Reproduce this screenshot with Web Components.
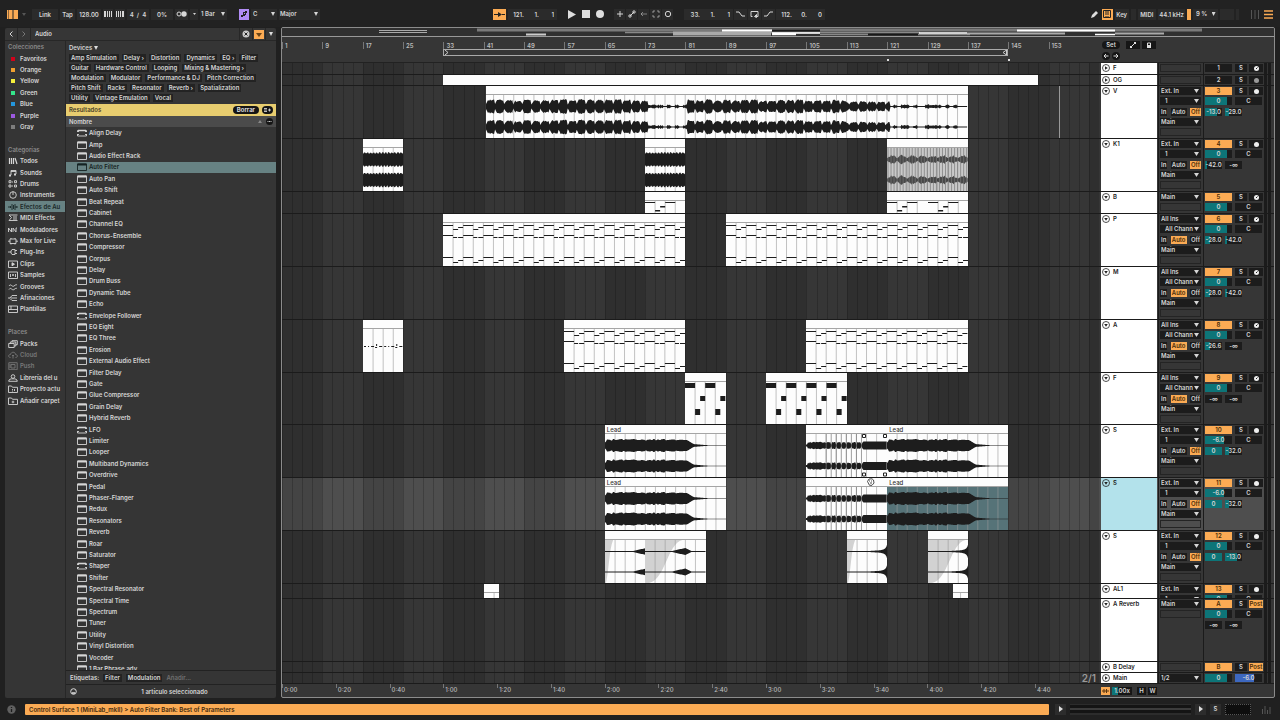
<!DOCTYPE html>
<html lang="es">
<head>
<meta charset="utf-8">
<title>Arrangement</title>
<style>
  :root {
    --orange: #fbab54;
    --teal: #0d7578;
    --panel: #363636;
    --well: #1c1c1c;
    --text: #d6d6d6;
    --dim: #8a8a8a;
  }
  * { box-sizing: border-box; }
  body {
    margin: 0;
    min-height: 100vh;
    display: flex;
    flex-direction: column;
    background: #202020;
    color: var(--text);
    font: 600 6px/8px Inter, "Liberation Sans", sans-serif;
  }
  main {
    flex: 1;
    display: flex;
    gap: 5px;
    padding: 0 5px;
  }
  arrange-view { flex: 1; min-width: 0; }
</style>
</head>
<body>
  <top-bar></top-bar>
  <main>
    <browser-panel></browser-panel>
    <arrange-view></arrange-view>
  </main>
  <status-bar></status-bar>

<script>
const BASE = `
  * { box-sizing: border-box; margin: 0; }
  button, input, select { font: inherit; color: inherit; border: 0; padding: 0; border-radius: 0; background: none; min-width: 0; }
  ul { list-style: none; padding: 0; }
  a { color: inherit; text-decoration: none; }
`;

class BaseElement extends HTMLElement {
  constructor() {
    super();
    this.attachShadow({ mode: 'open' });
  }

  connectedCallback() {
    this.shadowRoot.innerHTML = `<style>${BASE}${this.css}</style>${this.template}`;
  }
}

/* ---------- icons, all on a 10 x 8 grid unless noted ---------- */

const ICONS = {
  device: '<path d="M.5 1h9v6.500h-9z"/><path d="M.5 1.500h9" stroke-width="2"/>',
  maxdevice: '<path d="M.5 2.500v-1h9v1M.5 5.500v1.500h9V5.500M0 2.500h2M8 2.500h2M0 5.500h2M8 5.500h2"/><path d="M1 1.500h8" stroke-width="1.600"/>',
  books: '<path d="M1.500 1v6M3.500 1v6M5.500 1v6M7 1l2 6" stroke-width="1.200"/>',
  note: '<path d="M3 6V1.500h5V5M3 2.500h5"/><path d="M1 6.500h2M6 5.500h2" stroke-width="2"/>',
  drums: '<path d="M1 .7h2v2H1zM6.500.7h2v2h-2zM1 5h2v2H1zM6.500 5h2v2h-2z"/><path d="M4 2h1M4 6h1"/>',
  dial: '<circle cx="5" cy="4" r="3.300"/><path d="M5 .5V4"/>',
  wave: '<path d="M0 4h2M2.500 3v2M4 1v6M5.500 2v4M7 1v6M8 3v2M8 4h2"/>',
  midifx: '<path d="M9.500 1H1l2.500 2.500L1 6.500h8.500M5 3h4M5 5h4"/>',
  mod: '<path d="M.5 6V2l3 4V2M5 6V2l3 4V2h1"/>',
  max: '<path d="M2 2h6v4.500H2zM0 4.200h2M8 4.200h2M3 1v1M7 1v1M3 6.500v1M7 6.500v1"/>',
  plug: '<path d="M0 4h3M4 1.500h3v5H4L3 5V3zM7 2.500h2M7 5.500h2"/>',
  clip: '<path d="M.5 1h9v6.500h-9z"/><path d="M4 2.700L6.500 4.200 4 5.800z" fill="currentColor"/>',
  sample: '<path d="M.5 1h9v6.500h-9zM2.500 3v3M4 4h2M7.500 3v3M5 3v2"/>',
  groove: '<path d="M1 3c2-3 3 1.500 5 0s2-1.500 3-1M1 6.500c2-3 3 1.500 5 0s2-1.500 3-1"/>',
  tuning: '<path d="M0 4h2l2-2.500h5M3 4h6M2 4.500L4 6.500h5"/>',
  template: '<path d="M.5 1h9v6.500h-9zM.5 4.500h9M3 1v3.500"/>',
  packs: '<path d="M.7 3.500h5.500v4H.7zM2.300 3.500V2h5.500v4H6.200M4 2V.7h5.300v4H7.800"/>',
  cloud: '<path d="M2.500 6.500C0 6.500 0 3.500 2.500 3.500 3 .5 7.500 .5 7.500 3.500 10 3.500 10 6.500 7.500 6.500M5 7.500V4M4 5l1-1 1 1"/>',
  push: '<path d="M.8.700h8.400v7H.8zM3 2.500h4v3.500H3zM2 2v4"/>',
  user: '<circle cx="5" cy="2.500" r="1.800"/><path d="M.7 7.300c0-2.200 2-2.500 4.300-2.500s4.300.3 4.300 2.500z"/>',
  project: '<path d="M.5 7.500V1h3l1 1.300h5v5.200zM4 4.500h1M6.500 4v2M4 6h1"/>',
  addfolder: '<path d="M.5 7.500V1h3l1 1.300h5v5.200zM5 3.700v2.600M3.700 5h2.600"/>',
};

const icon = (name, w = 10, h = 8) =>
  `<svg width="${w}" height="${h}" viewBox="0 0 10 8" fill="none" stroke="currentColor" stroke-width=".9" aria-hidden="true">${ICONS[name]}</svg>`;

/* drop-down with the small triangle of the toolbar */
class UiSelect extends BaseElement {
  get css() {
    return `
      :host { display: grid; align-items: center; background: var(--well); height: 8px; overflow: hidden; }
      select { grid-area: 1 / 1; width: 100%; height: 8px; line-height: 8px; appearance: none; padding: 0 6px 0 var(--indent, 1px); outline: 0; }
      i { grid-area: 1 / 1; justify-self: end; margin-right: 2px; width: var(--arrow, 5px); height: 4px; background: var(--text); clip-path: polygon(0 0, 100% 0, 50% 100%); pointer-events: none; }
      option { color: #000; }
    `;
  }
  get template() {
    return `<select aria-label="${this.getAttribute('label')}"><option>${this.getAttribute('value')}</option></select><i></i>`;
  }
}

class TopBar extends BaseElement {
  get css() {
    return `
      :host {
        display: grid;
        grid-template-columns: 486fr 598fr 182px;
        align-items: center;
        height: 27px;
        padding: 1px 7px 0;
        background: #222;
      }
      .group { display: flex; align-items: center; gap: 2px; }
      .tight { gap: 1px; }
      .group > *, .pos { height: 11px; line-height: 11px; }
      button, .pos, .val { background: #2b2b2b; text-align: center; }
      button { display: grid; place-items: center; }
      button.on { background: var(--orange); color: #222; }
      button.bare { background: none; }
      button.scale { background: #b18cf5; color: #222; width: 10px; }
      ui-select { background: #2b2b2b; --indent: 3px; --arrow: 4px; }
      .pos { display: flex; justify-content: flex-end; gap: 2px; padding-right: 3px; width: 49px; }
      .pos input { width: 13px; text-align: right; }
      .link { width: 26px; } .tap { width: 15px; } .tempo { width: 24px; }
      .sq { width: 11px; } .nudge { width: 10px; }
      .meter { width: 4px; background: var(--orange); }
      .line { width: 20px; background: #2b2b2b; }
    `;
  }
  pos(label, parts) {
    return `<div class="pos" role="group" aria-label="${label}">${parts.map((p, i) => `<input aria-label="${label} ${i + 1}" value="${p}">`).join('')}</div>`;
  }
  get template() {
    return `
      <div class="group">
        <button class="bare" aria-label="Browser" style="width:11px">
          <svg width="11" height="11" viewBox="0 0 11 11" fill="#fbab54"><path d="M0 1h1.500v9H0zM2 1h3.500v9H2zM6.500 1H11v9H6.500z"/></svg></button>
        <button class="bare" aria-label="Vistas" style="width:7px"><svg width="4" height="3"><path d="M0 0h4L2 3z" fill="#555"/></svg></button>
        <span style="width:1px"></span>
        <button class="link">Link</button>
        <button class="tap">Tap</button>
        <input class="val tempo" aria-label="Tempo" value="128.00">
        <button class="nudge" aria-label="Nudge down"><svg width="8" height="6" fill="currentColor"><path d="M0 0h2v6H0zM3 0h1v6H3zM5 0h1v6H5zM7 0h1v6H7z"/></svg></button>
        <button class="nudge" aria-label="Nudge up"><svg width="8" height="6" fill="currentColor"><path d="M0 0h1v6H0zM2 0h1v6H2zM4 0h1v6H4zM6 0h2v6H6z"/></svg></button>
        <input class="val" aria-label="Compás" value="4  /  4" style="width:22px">
        <input class="val" aria-label="Swing" value="0%" style="width:22px">
        <button aria-label="Metrónomo" style="width:13px"><svg width="11" height="6"><circle cx="3" cy="3" r="2" fill="none" stroke="currentColor"/><circle cx="8" cy="3" r="2.700" fill="currentColor"/></svg></button>
        <button aria-label="Metrónomo, opciones" style="width:8px"><svg width="3" height="2"><path d="M0 0h3L1.500 2z" fill="currentColor"/></svg></button>
        <ui-select label="Cuantización" value="1 Bar" style="width:27px;--indent:1px"></ui-select>
        <span style="width:8px"></span>
        <button class="scale" aria-label="Escala"><svg width="8" height="8" fill="currentColor"><path d="M1 5h2v2H1zM3 2h1v4H3zM5 1h1v4H5zM4 2h2v1H4zM6 1h1v2H6zM4 4h1v2H4z"/></svg></button>
        <ui-select label="Tónica" value="C" style="width:26px;--indent:2px"></ui-select>
        <ui-select label="Modo" value="Major" style="width:41px;--indent:1px"></ui-select>
      </div>
      <div class="group">
        <button class="on" aria-label="Follow" style="width:13px"><svg width="11" height="5"><path d="M0 2.500h11" stroke="currentColor" stroke-dasharray="5 1 1 1"/><path d="M4 0l4 2.500L4 5z" fill="currentColor"/></svg></button>
        ${this.pos('Posición', ['121.', '1.', '1'])}
        <span style="width:5px"></span>
        <button class="bare" aria-label="Play" style="width:12px"><svg width="8" height="9"><path d="M0 0l8 4.500L0 9z" fill="#ddd"/></svg></button>
        <button class="bare" aria-label="Stop" style="width:12px"><svg width="8" height="8"><path d="M0 0h8v8H0z" fill="#ddd"/></svg></button>
        <button class="bare" aria-label="Record" style="width:12px"><svg width="8" height="8"><circle cx="4" cy="4" r="4" fill="#ddd"/></svg></button>
        <span style="width:4px"></span>
        <div class="group tight">
          ${[
            ['Overdub', '<path d="M4 1v6M1 4h6"/>'],
            ['Automation arm', '<path d="M2 6l4-4"/><circle cx="2" cy="6" r="1.200"/><circle cx="6" cy="2" r="1.200"/>'],
            ['Re-enable', '<path d="M1 4h6M3 2L1 4l2 2" opacity=".5"/>'],
            ['Capture', '<path d="M1 3V1h2M5 1h2v2M7 5v2H5M3 7H1V5" opacity=".6"/>'],
            ['Session record', '<circle cx="4" cy="4" r="2.700"/>'],
          ].map(([n, p]) => `<button class="sq" aria-label="${n}"><svg width="8" height="8" fill="none" stroke="currentColor">${p}</svg></button>`).join('')}
        </div>
        <span style="width:7px"></span>
        <div class="group tight">
        ${this.pos('Inicio de loop', ['33.', '1.', '1'])}
        <button aria-label="Punch in" style="width:13px"><svg width="9" height="6" fill="none" stroke="currentColor"><path d="M0 1h3l3 4h3"/></svg></button>
        <button aria-label="Loop" style="width:13px"><svg width="9" height="8" fill="none" stroke="currentColor"><path d="M2.500 6.500H1v-5h7v5H6"/><path d="M6.500 4.500L4.500 6.500l2 1z" fill="currentColor"/></svg></button>
        <button aria-label="Punch out" style="width:13px"><svg width="9" height="6" fill="none" stroke="currentColor"><path d="M0 5h3l3-4h3"/></svg></button>
        ${this.pos('Largo de loop', ['112.', '0.', '0'])}
        </div>
      </div>
      <div class="group">
        <button class="bare" aria-label="Dibujar" style="width:9px"><svg width="8" height="8"><path d="M0 8l1-3 4-4 2 2-4 4z" fill="#ddd"/></svg></button>
        <button class="on sq" aria-label="Teclado MIDI"><svg width="8" height="8" fill="none" stroke="currentColor"><path d="M.5.500h7v7h-7zM3 1v4M5 1v4M3 6v1M5 6v1"/></svg></button>
        <button style="width:14px">Key</button>
        <button aria-label="Actividad MIDI" style="width:5px"></button>
        <button style="width:19px">MIDI</button>
        <button style="width:27px">44.1 kHz</button>
        <span class="meter"></span>
        <ui-select label="CPU" value="9 %" style="width:25px"></ui-select>
        <span class="line" style="width:15px"></span>
        <span class="line" style="width:3px"></span>
        <span style="width:8px"></span>
        <button class="bare" aria-label="Sesión"><svg width="8" height="9"><path d="M.5 0v9M4 0v9M7.500 0v9" stroke="#555"/></svg></button>
        <span style="width:1px"></span>
        <button class="bare" aria-label="Arreglo"><svg width="9" height="9"><path d="M0 1h9M0 4.500h9M0 8h9" stroke="#fbab54" stroke-width="1.500"/></svg></button>
      </div>`;
  }
}

/* ---------- browser ---------- */

const SIDEBAR = [
  ['Colecciones'],
  ['Favoritos', '#d0021b'], ['Orange', '#f0a030'], ['Yellow', '#f5f03c'], ['Green', '#34e58a'],
  ['Blue', '#2496dc'], ['Purple', '#9b59e0'], ['Gray', '#7d7d7d'],
  [], ['Categorías'],
  ['Todos', 'books'], ['Sounds', 'note'], ['Drums', 'drums'], ['Instruments', 'dial'],
  ['Efectos de Au', 'wave', 'on'], ['MIDI Effects', 'midifx'], ['Moduladores', 'mod'],
  ['Max for Live', 'max'], ['Plug-Ins', 'plug'], ['Clips', 'clip'], ['Samples', 'sample'],
  ['Grooves', 'groove'], ['Afinaciones', 'tuning'], ['Plantillas', 'template'],
  [], ['Places'],
  ['Packs', 'packs'], ['Cloud', 'cloud', 'off'], ['Push', 'push', 'off'],
  ['Librería del u', 'user'], ['Proyecto actu', 'project'], ['Añadir carpet', 'addfolder'],
];

const TAGS = ['Amp Simulation', 'Delay ›', 'Distortion', 'Dynamics', 'EQ ›', 'Filter', 'Guitar',
  'Hardware Control', 'Looping', 'Mixing & Mastering ›', 'Modulation', 'Modulator',
  'Performance & DJ', 'Pitch Correction', 'Pitch Shift', 'Racks', 'Resonator', 'Reverb ›',
  'Spatialization', 'Utility', 'Vintage Emulation', 'Vocal'];

const DEVICES = ['Align Delay', 'Amp', 'Audio Effect Rack', 'Auto Filter', 'Auto Pan', 'Auto Shift',
  'Beat Repeat', 'Cabinet', 'Channel EQ', 'Chorus-Ensemble', 'Compressor', 'Corpus', 'Delay',
  'Drum Buss', 'Dynamic Tube', 'Echo', 'Envelope Follower', 'EQ Eight', 'EQ Three', 'Erosion',
  'External Audio Effect', 'Filter Delay', 'Gate', 'Glue Compressor', 'Grain Delay',
  'Hybrid Reverb', 'LFO', 'Limiter', 'Looper', 'Multiband Dynamics', 'Overdrive', 'Pedal',
  'Phaser-Flanger', 'Redux', 'Resonators', 'Reverb', 'Roar', 'Saturator', 'Shaper', 'Shifter',
  'Spectral Resonator', 'Spectral Time', 'Spectrum', 'Tuner', 'Utility', 'Vinyl Distortion',
  'Vocoder', '1 Bar Phrase.adv'];
const MAX_DEVICES = ['Align Delay', 'Envelope Follower', 'LFO', 'Shaper'];

class BrowserPanel extends BaseElement {
  get css() {
    return `
      :host { display: grid; grid-template: 12px minmax(0, 1fr) / 60px 210px; gap: 1px; width: 271px; margin-top: 1px; background: #272727; border-radius: 2px; overflow: hidden; }
      .search { grid-column: 1 / -1; display: flex; gap: 1px; align-items: stretch; }
      .search > * { background: var(--panel); }
      .search button { width: 12px; display: grid; place-items: center; }
      .search input { flex: 1; padding-left: 4px; outline: 0; }
      nav, .list { background: #353535; }
      nav, .rows { display: grid; grid-auto-rows: 12px 11px 11px 12px 11px; align-content: start; align-items: center; }
      nav { overflow: hidden; }
      nav h2 { font: inherit; color: var(--dim); padding-left: 3px; }
      nav a { display: flex; align-items: center; gap: 2px; padding-left: 3px; height: 11px; white-space: nowrap; }
      nav a.on { background: #678283; color: #1a2727; }
      nav a.off { color: #777; }
      nav svg { flex: none; }
      .dot { flex: none; width: 4px; height: 4px; margin: 0 3px; }
      .list { display: flex; flex-direction: column; min-height: 0; }
      .kind { height: 13px; line-height: 13px; padding-left: 3px; text-align: left; }
      .chips { display: flex; flex-wrap: wrap; gap: 2px 3px; padding: 0 14px 2px 3px; }
      .chips button, .foot button { background: #232323; padding: 0 2px; height: 8px; line-height: 8px; }
      .results { display: flex; align-items: center; gap: 3px; height: 12px; padding: 0 3px; background: #e8cd6f; color: #4a4228; }
      .results h2 { font: inherit; flex: 1; }
      .results button { background: #151515; color: #e8e8e8; border-radius: 4px; padding: 0 4px; height: 8px; line-height: 8px; }
      .results button:last-child { padding: 0 2px; }
      .sort { display: flex; align-items: center; gap: 4px; height: 11px; padding: 0 3px; background: #4b4b4b; }
      .sort button { flex: 1; text-align: left; }
      .rows { flex: 1; contain: size; overflow: hidden; }
      .rows li { display: flex; align-items: center; gap: 2px; height: 11px; padding-left: 11px; white-space: nowrap; }
      .rows li[aria-selected=true] { background: #678283; color: #152222; }
      .foot { display: flex; align-items: center; gap: 4px; height: 14px; padding: 0 4px; border-top: 1px solid #222; }
      .foot input { width: 60px; }
      .foot input::placeholder { color: #707070; opacity: 1; }
      .foot p { flex: 1; text-align: center; padding-right: 4px; }
    `;
  }
  item([name, mark, state = '']) {
    if (!name) { return '<span></span>'; }
    if (!mark) { return `<h2>${name}</h2>`; }
    let glyph = mark[0] == '#' ? `<i class="dot" style="background:${mark}"></i>` : icon(mark);
    return `<a href="#" class="${state}">${glyph}<span>${name}</span></a>`;
  }
  get template() {
    return `
      <div class="search">
        <button aria-label="Atrás"><svg width="4" height="6" fill="none" stroke="currentColor"><path d="M3.500.500L1 3l2.500 2.500"/></svg></button>
        <button aria-label="Adelante"><svg width="4" height="6" fill="none" stroke="#777"><path d="M.5.500L3 3 .5 5.500"/></svg></button>
        <input aria-label="Buscar" value="Audio">
        <button aria-label="Limpiar búsqueda"><svg width="8" height="8"><circle cx="4" cy="4" r="3.500" fill="#ccc"/><path d="M2.500 2.500l3 3M5.500 2.500l-3 3" stroke="#222"/></svg></button>
        <button aria-label="Filtros"><svg width="10" height="9"><path d="M0 0h10v9H0z" fill="#fbab54"/><path d="M2 3h6L5 7z" fill="#6b4417"/></svg></button>
        <button aria-label="Opciones" style="width:10px"><svg width="4" height="4"><path d="M0 0h4L2 4z" fill="#ddd"/></svg></button>
      </div>
      <nav aria-label="Navegador">${SIDEBAR.map(i => this.item(i)).join('')}</nav>
      <div class="list">
        <button class="kind">Devices <svg width="4" height="4"><path d="M0 0h4L2 4z" fill="#ddd"/></svg></button>
        <div class="chips">${TAGS.map(t => `<button>${t.replace('&', '&amp;')}</button>`).join('')}</div>
        <div class="results"><h2>Resultados</h2><button>Borrar</button><button aria-label="Guardar"><svg width="7" height="4" stroke="currentColor"><path d="M0 .5h3M0 2h3M0 3.500h3M4 2h3M5.500.500v3" stroke-width=".8"/></svg></button></div>
        <div class="sort"><button>Nombre</button><svg width="4" height="3"><path d="M0 3h4L2 0z" fill="#888"/></svg><svg width="7" height="7"><circle cx="3.500" cy="3.500" r="3.500" fill="#151515"/><path d="M1.500 3.500h4" stroke="#ccc" stroke-dasharray="1 .5"/></svg></div>
        <ul class="rows" role="listbox" aria-label="Resultados">${DEVICES.map(d =>
          `<li role="option" aria-selected="${d == 'Auto Filter'}">${icon(MAX_DEVICES.includes(d) ? 'maxdevice' : 'device')}<span>${d}</span></li>`).join('')}</ul>
        <div class="foot"><label for="tag">Etiquetas:</label><button>Filter</button><button>Modulation</button><input id="tag" placeholder="Añadir..."></div>
        <div class="foot"><button aria-label="Preescuchar" style="background:none;padding:0"><svg width="7" height="7" fill="none" stroke="#ddd"><circle cx="3.500" cy="3.500" r="2.800"/><path d="M2 5h3" stroke-width="1.500"/></svg></button><p>1 artículo seleccionado</p></div>
      </div>`;
  }
}

/* ---------- arrangement ---------- */

const BARS = 162;
const PX = 5; // drawing units per bar

/* small repeatable noise so a waveform looks the same on each load */
const noise = n => {
  let s = Math.sin(n * 127.1 + 11.7) * 43758.5453;
  return s - Math.floor(s);
};

const ENVELOPES = {
  vocal(x) {
    let bar = 41.5 + x / PX;
    let quiet = (bar > 73.500 && bar < 81.500) || bar > 121.500;
    if (quiet) { return noise(Math.floor(x / 4) + 8) > .45 ? .8 + noise(x) * 1.4 : .4; }
    let phrase = Math.floor(x / 9);
    let edge = (x % 9) < 1 ? .4 : (x % 9) < 2 ? .7 : 1;
    let level = bar > 113 ? 3 : 4.200;
    return (level + noise(phrase) * 1.8 + noise(x) * 1.6) * edge;
  },
  kick(x) { return 7.500 - (x % 3 < 1 ? 1.500 : 0) - noise(x) * .8; },
  hats(x) { return 1.200 + 3.500 * Math.abs(Math.sin(x / 3.2)) * (.4 + noise(x) * .7); },
  lead(x) {
    if (x < 2) { return 3 + x; }
    if (x < 82) { return 5 + noise(Math.floor(x / 2)) * 1.500; }
    if (x < 88) { return 5 - (x - 82) * .6; }
    return Math.max(.3, 1.4 - (x - 88) * .08);
  },
  chops(x) {
    if (x < 2) { return 1; }
    if (x > 56) { return 4; }
    if (x > 20) { return x % 5 < 1 ? .8 : 2.800 + noise(x) * .8; }
    return 2.500 + noise(x) * 1.2;
  },
  swell(x, w) { return x > w - 13 ? .4 + (x - w + 13) * .22 : .4; },
  swellTail(x) {
    if (x < 26) { return .4; }
    return x < 40 ? .4 + (x - 26) * .22 : Math.max(.4, 3.500 - (x - 40) * .5);
  },
  burst(x, w) { return .4 + 2.500 * Math.exp((x - w) / 7) + 5 * Math.exp((x - w) / 1.2); },
};

const wave = (env, w) => [11.5, 32].map(mid => {
  let top = [], bottom = [];
  for (let x = 0; x <= w; x++) {
    let a = ENVELOPES[env](x, w);
    top.push(`${x} ${(mid - a).toFixed(1)}`);
    bottom.unshift(`${x} ${(mid + a).toFixed(1)}`);
  }
  return `<path d="M${top.join('L')}L${bottom.join('L')}z" fill="#1d1d1d"/>`;
}).join('');

/* [x, y, width, height] of the notes in one repeat */
const PATTERNS = {
  chords: { step: 20, notes: [[0, 2, 10, 1], [10, 6, 5, 1], [15, 4, 5, 1], [0, 12, 10, 1], [10, 14, 4, 1], [15, 14, 5, 1], [0, 34, 10, 1], [10, 39, 5, 1], [15, 37, 5, 1]] },
  bass: { step: 40, notes: [[0, 1, 10, 1], [10, 9, 5, 1.5], [15, 5, 5, 1.5], [20, 1, 10, 1]] },
  drums: { step: 20, notes: [[0, 1, 10, 5], [15, 14, 5, 5], [10, 27, 5, 6]] },
  ticks: { step: 20, notes: [[1, 17, 2, 1], [5, 17, 1, 1], [8, 17, 3, 1], [12, 18, 2, 1], [13, 15, 1, 2], [16, 17, 3, 1]] },
  empty: { step: 20, notes: [] },
};

const midi = (name, w) => {
  let { step, notes } = PATTERNS[name], out = '';
  for (let x = 0; x < w; x += step) {
    for (let [nx, y, nw, h] of notes) {
      let width = Math.min(nw, w - x - nx);
      if (width > 0) { out += `<path d="M${x + nx} ${y}h${width}v${h}h-${width}z" fill="#1d1d1d"/>`; }
    }
  }
  return out;
};

class ArrangeClip extends BaseElement {
  connectedCallback() {
    let at = bar => (bar - 1) * 2 + 1;
    this.style.gridColumn = `${at(this.start)} / ${at(this.end)}`;
    super.connectedCallback();
  }
  get start() { return +this.getAttribute('start'); }
  get end() { return +this.getAttribute('end'); }

  get css() {
    return `
      :host { display: grid; grid-template-rows: 9px minmax(0, 1fr); grid-row: 1; background: #fdfdfd; color: #333; min-width: 0; overflow: hidden; font-weight: 500; }
      .title { border-bottom: 1px solid #a5a5a5; padding-left: 2px; line-height: 10px; white-space: nowrap; }
      :host([kind=plain]) .title { border: 0; }
      svg { display: block; width: 100%; height: 43px; }
      :host([selected]) svg { background: #567378; }
      :host([dense]) svg { background: #c9c9c9; }
    `;
  }
  get template() {
    let kind = this.getAttribute('kind');
    let w = (this.end - this.start) * PX;
    if (kind == 'plain') { return '<div class="title"></div>'; }
    let lines = '', offset = this.start % 2 == 1 ? 10 : 7.500;
    for (let x = offset; x < w; x += 10) { lines += `M${x} 0v43`; }
    let cuts = '';
    if (kind == 'chops') { for (let x = 20; x <= 55; x += 5) { cuts += `M${x} 0v43`; } }
    if (this.hasAttribute('dense')) { for (let x = 1; x < w; x += 3) { cuts += `M${x} 0v43`; } }
    let fade = {
      short: '<path d="M0 0h8C4 10 4 30 1 43H0z" fill="#d2d2d2"/>',
      long: '<path d="M0 0h37C22 4 20 40 4 43H0z" fill="#d2d2d2"/>',
    }[this.getAttribute('fade')] ?? '';
    return `
      <div class="title">${this.getAttribute('name') ?? ''}</div>
      <svg viewBox="0 0 ${w} 43" preserveAspectRatio="none" aria-hidden="true">
        ${fade}
        <path d="${lines}" stroke="#999" stroke-width=".6"/>
        <g opacity="${this.hasAttribute('dense') ? .75 : 1}">${PATTERNS[kind] ? midi(kind, w) : wave(kind, w)}</g>
        <path d="${cuts}" stroke="#777" stroke-width=".7"/>
      </svg>`;
  }
}

class ArrangeTrack extends BaseElement {
  get css() {
    return `
      :host { display: grid; grid-template-columns: minmax(0, 1fr) 59px 45px 60px 11px; border-bottom: 1px solid #1b1b1b; overflow: hidden; background: var(--panel); height: 53px; }
      :host([size=fold]) { height: 11px; }
      :host([size=first]) { height: 12px; }
      :host([size=half]) { height: 22px; }
      :host([size=cut]) { height: 15px; }
      :host([size=less]) { height: 52px; }
      :host([size=tall]) { height: 63px; }
      :host([selected]) { background: #4e4e4e; }
      .lane {
        display: grid;
        grid-template: minmax(0, 1fr) / repeat(${BARS * 2}, minmax(0, 1fr));
        position: relative;
        overflow: hidden;
        background:
          repeating-linear-gradient(90deg, #0003 0 1px, #0000 1px calc(100% / ${BARS / 2})),
          repeating-linear-gradient(90deg, #0002 0 calc(800% / ${BARS}), #0000 calc(800% / ${BARS}) calc(1600% / ${BARS}));
      }
      .name { display: flex; gap: 3px; padding: 1px 1px 0; margin: 0 1px 0 2px; background: #fff; color: #222; }
      :host([selected]) .name { background: #b3e2eb; }
      .name button { width: 8px; height: 8px; display: grid; }
      .io, .mix { display: grid; align-content: start; align-items: center; grid-auto-rows: 10px 10px 11px 10px 10px; min-height: 0; }
      .io { padding: 0 2px 0 1px; border-left: 1px solid #1b1b1b; }
      .io .blank { height: 8px; border: 1px solid #242424; }
      .mon { display: flex; justify-content: space-between; }
      .mon button { padding: 0 1px; }
      .io ui-select.ch { --indent: 5px; }
      button { height: 8px; line-height: 8px; text-align: center; }
      .io button, .mix button, .mix input { background: var(--well); }
      .mix { border-left: 1px solid #1b1b1b; padding-left: 1px; }
      .row { display: flex; gap: 3px; }
      .row > * { height: 8px; line-height: 8px; }
      input { width: 27px; text-align: center; outline: 0; }
      .send input { width: 17px; }
      .mix .num { width: 27px; background: var(--well); }
      .mix .num.on, .io .on, .mix .post { background: var(--orange); color: #4a2c08; }
      .mix .s { width: 12px; }
      .mix .arm { width: 14px; display: grid; place-items: center; margin-left: -1px; }
      .meter { background: linear-gradient(90deg, #0000 1px, #1b1b1b 1px 4px, #333 4px 5px, #1b1b1b 5px 8px, #0000 8px); }
    `;
  }
  fill(value, width, color = 'var(--teal)') {
    return `style="background:linear-gradient(90deg,${color} ${width}%,var(--well) ${width}%)" value="${value}"`;
  }
  get io() {
    let [input, mon] = (this.getAttribute('io') ?? '').split('|');
    if (!input) { return '<div class="blank"></div>'; }
    let head = `<ui-select label="Entrada" value="${input}"></ui-select>`;
    if (!mon) { return head + '<div class="blank"></div>'; }
    let channel = input == 'Ext. In' ? '1' : 'All Chann';
    return `${head}
      <ui-select class="ch" label="Canal" value="${channel}"></ui-select>
      <div class="mon">${['In', 'Auto', 'Off'].map(m => `<button class="${m == mon ? 'on' : ''}">${m}</button>`).join('')}</div>
      <ui-select label="Salida" value="Main"></ui-select>
      <div class="blank"></div>`;
  }
  get mix() {
    let num = this.getAttribute('num');
    let arm = this.getAttribute('arm') ?? 'audio';
    if (this.hasAttribute('master')) {
      return `<div class="row"><input aria-label="Volumen" ${this.fill('0', 82)}><input aria-label="Cue" ${this.fill('-6.0', 72, '#3d68c0')}></div>`;
    }
    let armGlyph = {
      audio: '<circle cx="3.500" cy="3.500" r="2.500" fill="#eee"/>',
      midi: '<circle cx="3.500" cy="3.500" r="2.500" fill="#eee"/><path d="M3 4l1.500-1.500" stroke="#222"/>',
      group: '<circle cx="3.500" cy="3.500" r="2.500" fill="#999"/>',
    }[arm];
    let out = `<div class="row"><button class="num ${this.hasAttribute('mute') ? '' : 'on'}">${num}</button><button class="s">S</button>${
      arm == 'post' ? '<button class="post arm">Post</button>' : `<button class="arm" aria-label="Armar"><svg width="7" height="7">${armGlyph}</svg></button>`}</div>`;
    let vol = this.getAttribute('vol');
    if (vol) {
      out += `<div class="row"><input aria-label="Volumen" ${this.fill(vol, vol == '0' ? 82 : 72)}><input aria-label="Paneo" value="C"></div>`;
    }
    let sends = this.getAttribute('sends');
    if (sends) {
      let amount = { '0': 100, '-13.0': 68, '-26.6': 32, '-28.0': 28, '-29.0': 26, '-32.0': 22, '-42.0': 14 };
      out += `<div class="row send">${sends.split(' ').map((s, i) => `<input aria-label="Envío ${'AB'[i]}" ${this.fill(s, amount[s] ?? 0)}>`).join('')}</div>`;
    }
    return out;
  }
  get template() {
    let open = !['fold', 'first'].includes(this.getAttribute('size'));
    return `
      <div class="lane"><slot></slot></div>
      <div class="name"><button aria-label="Plegar"><svg width="8" height="8"><circle cx="4" cy="4" r="3.500" fill="none" stroke="#222" stroke-width=".8"/><path d="${open ? 'M2.200 3h3.600L4 5.800z' : 'M3 2.200v3.600L5.800 4z'}" fill="#222"/></svg></button><slot name="name"></slot></div>
      <div class="io">${this.io}</div>
      <div class="mix">${this.mix}</div>
      <div class="meter"></div>`;
  }
}

class ArrangeView extends BaseElement {
  get css() {
    return `
      :host { display: flex; flex-direction: column; border: 1px solid #8c8c8c; border-radius: 2px; background: var(--panel); overflow: hidden; }
      .overview { display: block; width: 100%; height: 9px; background: #303030; }
      .head { display: grid; grid-template-columns: minmax(0, 1fr) 175px; height: 26px; border-bottom: 1px solid #222; }
      .ruler { display: grid; grid-template: 12px 7px 6px / repeat(${BARS}, minmax(0, 1fr)); overflow: hidden; }
      .ruler span { grid-row: 1; border-left: 1px solid #777; padding-left: 2px; height: 7px; margin-top: 5px; line-height: 8px; color: #bbb; white-space: nowrap; }
      .loop { grid-area: 2 / 33 / 3 / 145; border: 1px solid #aaa; display: flex; justify-content: space-between; }
      .mark { grid-row: 3; width: 2px; height: 2px; margin-top: 3px; background: #ddd; }
      .tools { display: grid; grid-template: 10px 10px / 18px 1fr; gap: 1px 6px; padding: 4px 0 0 3px; }
      .tools button { background: #161616; height: 8px; line-height: 8px; display: grid; place-items: center; }
      .tools .round { border-radius: 4px; }
      .tools div { display: flex; gap: 2px; }
      .tools .sq { width: 14px; }
      .tools .dot { width: 8px; }
      .cursor { position: absolute; left: 71.5%; top: 0; }
      .handles { position: absolute; left: 71%; top: 9px; width: 25px; height: 43px; }
      .pin { grid-row: 1; grid-column: 309; width: 1px; background: #999; }
      .zoom { grid-area: 1 / 1 / 2 / -1; justify-self: end; font-size: 10px; line-height: 10px; padding-right: 3px; color: #999; }
      .foot { display: grid; grid-template-columns: minmax(0, 1fr) 175px; height: 13px; }
      .time { display: flex; overflow: hidden; }
      .time span { flex: 0 0 calc(3200% / 3 / ${BARS}); border-left: 1px solid #777; height: 4px; padding: 2px 0 0 1px; color: #bbb; font-weight: 500; }
      .opts { display: flex; align-items: center; gap: 2px; padding-left: 2px; }
      .opts button, .opts input { height: 8px; line-height: 8px; background: #161616; width: 9px; text-align: center; }
      .opts input { width: 20px; margin-right: 3px; background: linear-gradient(90deg, var(--teal) 30%, #161616 30%); }
      .opts .on { background: var(--orange); }
    `;
  }
  get template() {
    let bars = Array.from({ length: 20 }, (_, i) => i * 8 + 1);
    let times = Array.from({ length: 15 }, (_, i) => `${Math.floor(i / 3)}:${['00', '20', '40'][i % 3]}`);
    let clip = (start, end, kind, extra = '') => `<arrange-clip start="${start}" end="${end}" kind="${kind}" ${extra}></arrange-clip>`;
    let track = (name, attrs, clips = '') => `<arrange-track ${attrs}><span slot="name">${name}</span>${clips}</arrange-track>`;
    return `
      <svg class="overview" viewBox="0 0 992 9" preserveAspectRatio="none" aria-hidden="true">
        <path d="M97 2.500h48M97 4.500h48" stroke="#aaa"/>
        <path d="M195 2h725" stroke="#7a7a7a" stroke-width="3"/>
        <path d="M343 4.500h295M538 6.500h150" stroke="#888" stroke-width="1.500"/>
        <path d="M244 6.500h20" stroke="#ccc" stroke-width="2"/>
        <path d="M391 5.500h98" stroke="#aaa" stroke-width="4"/>
        <path d="M440 2.500h50M735 2.500h98" stroke="#fff" stroke-width="2"/>
        <path d="M490 5h48M490 6.500h24M637 5h48M813 6.500h20" stroke="#fff" stroke-width="1.500"/>
        <path d="M490 2.500h48M586 6.500h50" stroke="#181818" stroke-width="2"/>
        <path d="M685 5.500h98M833 5.500h49" stroke="#aaa" stroke-width="2"/>
        <path d="M0 8.500h992" stroke="#999"/>
      </svg>
      <div class="head">
        <div class="ruler">
          ${bars.map(b => `<span style="grid-column:${b} / span ${Math.min(8, BARS - b)}">${b}</span>`).join('')}
          <div class="loop"><svg width="5" height="5" fill="none" stroke="#ccc"><path d="M1 0l3 2.500L1 5"/></svg><svg width="5" height="5" fill="none" stroke="#ccc"><path d="M4.500 0L1 2.500 4.500 5z"/></svg></div>
          <i class="mark" style="grid-column:121"></i><i class="mark" style="grid-column:145"></i>
        </div>
        <div class="tools">
          <button class="round">Set</button>
          <div><button class="sq" aria-label="Automatización"><svg width="6" height="6"><path d="M1 5l4-4" stroke="#ddd"/><path d="M0 4h2v2H0zM4 0h2v2H4z" fill="#ddd"/></svg></button><button class="sq" aria-label="Bloquear"><svg width="6" height="6"><path d="M1 3h4v3H1z" fill="#ddd"/><path d="M1.500 3V1h3v2" fill="none" stroke="#ddd"/></svg></button></div>
          <div><button class="round dot" aria-label="Locator anterior"><svg width="6" height="6" fill="none" stroke="#ddd"><path d="M5.500 3H1M3 1L1 3l2 2"/></svg></button><button class="round dot" aria-label="Locator siguiente"><svg width="6" height="6" fill="none" stroke="#ddd"><path d="M.5 3H5M3 1l2 2-2 2"/></svg></button></div>
        </div>
      </div>
      ${track('F', 'size="first" num="1" mute arm="midi"')}
      ${track('OG', 'size="fold" num="2" mute arm="group"', clip(33, 151, 'plain'))}
      ${track('V', 'num="3" io="Ext. In|Off" vol="0" sends="-13.0 -29.0"', clip(41.5, 137, 'vocal') + '<i class="pin"></i>')}
      ${track('K1', 'num="4" io="Ext. In|Off" vol="0" sends="-42.0 -∞"', clip(17, 25, 'kick') + clip(73, 81, 'kick') + clip(121, 137, 'hats', 'dense'))}
      ${track('B', 'size="half" num="5" io="Main" vol="0" arm="midi"', clip(73, 81, 'bass') + clip(121, 129, 'bass') + clip(129, 137, 'bass'))}
      ${track('P', 'num="6" io="All Ins|Auto" vol="0" arm="midi" sends="-28.0 -42.0"', clip(33, 81, 'chords') + clip(89, 137, 'chords'))}
      ${track('M', 'num="7" io="All Ins|Auto" vol="0" arm="midi" sends="-28.0 -42.0"')}
      ${track('A', 'num="8" io="All Ins|Auto" vol="0" arm="midi" sends="-26.6 -∞"', clip(17, 25, 'ticks') + clip(57, 81, 'chords') + clip(105, 137, 'chords'))}
      ${track('F', 'size="less" num="9" io="All Ins|Auto" vol="0" arm="midi" sends="-∞ -∞"', clip(81, 89, 'drums') + clip(97, 113, 'drums'))}
      ${track('S', 'num="10" io="Ext. In|Off" vol="-6.0" sends="0 -32.0"', clip(65, 89, 'lead', 'name="Lead"') + clip(105, 121, 'chops') + clip(121, 145, 'lead', 'name="Lead"') +
        '<svg class="handles" viewBox="0 0 25 43" fill="#fff" stroke="#222"><path d="M.5.500h3v3h-3zM21.500.500h3v3h-3zM.5 39h3v3h-3zM21.500 39h3v3h-3z"/></svg>')}
      ${track('S', 'selected num="11" io="Ext. In|Off" vol="-6.0" sends="0 -32.0"', clip(65, 89, 'lead', 'name="Lead"') + clip(105, 121, 'chops') + clip(121, 145, 'lead', 'name="Lead" selected') +
        '<svg class="cursor" width="9" height="8"><path d="M1.500 3.500L3 1l3-.2L7.500 2l.5 3-2 2.300H3.500z" fill="#fff" stroke="#222" stroke-width=".8"/><path d="M3 3h1M5 3h1M4 5h2" stroke="#222" stroke-width=".8"/></svg>')}
      ${track('S', 'num="12" io="Ext. In|Off" vol="0" sends="0 -13.0"', clip(65, 73, 'swell', 'fade="short"') + clip(73, 85, 'swellTail', 'fade="long"') + clip(113, 121, 'burst', 'fade="short"') + clip(129, 137, 'burst', 'fade="long"'))}
      ${track('AL1', 'size="cut" num="13" io="Ext. In|Off" vol="0"', clip(41, 44, 'empty') + clip(134, 137, 'empty'))}
      ${track('A Reverb', 'size="tall" num="A" io="Main" vol="0" arm="post" sends="-∞ -∞"')}
      ${track('B Delay', 'size="fold" num="B" arm="post"')}
      ${track('Main', 'size="fold" master io="1/2"', '<span class="zoom">2/1</span>')}
      <div class="foot">
        <div class="time">${times.map(t => `<span>${t}</span>`).join('')}</div>
        <div class="opts"><button class="on" aria-label="Seguir"><svg width="7" height="4"><path d="M0 2h7M2 0v4M4.500 0v4" stroke="#5a3610"/></svg></button><input aria-label="Escala de tiempo" value="1.00x"><button>H</button><button>W</button></div>
      </div>`;
  }
}

class StatusBar extends BaseElement {
  get css() {
    return `
      :host { display: flex; align-items: center; gap: 4px; height: 22px; padding: 0 7px; }
      p { flex: 1; height: 11px; line-height: 11px; margin: 0 2px 0 6px; padding-left: 4px; background: var(--orange); color: #40280c; border-radius: 1px; }
      button { width: 11px; height: 11px; display: grid; place-items: center; background: #2c2c2c; }
      .info { background: none; width: 8px; }
      .mini { width: 121px; height: 11px; background: linear-gradient(#2c2c2c 1px, #141414 1px 4px, #3c3c3c 4px 6px, #141414 6px 9px, #2c2c2c 9px); }
      .chain { width: 26px; height: 11px; border: 1px dotted #555; background: #0e0e0e; }
    `;
  }
  get template() {
    let play = '<svg width="4" height="6"><path d="M0 0l4 3-4 3z" fill="#ddd"/></svg>';
    return `
      <button class="info" aria-label="Info"><svg width="9" height="9"><circle cx="4.500" cy="4.500" r="4.200" fill="#606060"/><path d="M4.500 4v3M4.500 2v1" stroke="#1c1c1c" stroke-width="1.300"/></svg></button>
      <p>Control Surface 1 (MiniLab_mkII) &gt; Auto Filter Bank: Best of Parameters</p>
      <button aria-label="Vista de clip">${play}</button>
      <div class="mini"></div>
      <button aria-label="Vista de dispositivos">${play}</button>
      <button>S</button>
      <div class="chain"></div>
      <svg width="18" height="9"><path d="M7.500 9V4M10 9V1M12.500 9V5M15 9V2" stroke="#555"/></svg>`;
  }
}

customElements.define('ui-select', UiSelect);
customElements.define('top-bar', TopBar);
customElements.define('browser-panel', BrowserPanel);
customElements.define('arrange-clip', ArrangeClip);
customElements.define('arrange-track', ArrangeTrack);
customElements.define('arrange-view', ArrangeView);
customElements.define('status-bar', StatusBar);
</script>
</body>
</html>
